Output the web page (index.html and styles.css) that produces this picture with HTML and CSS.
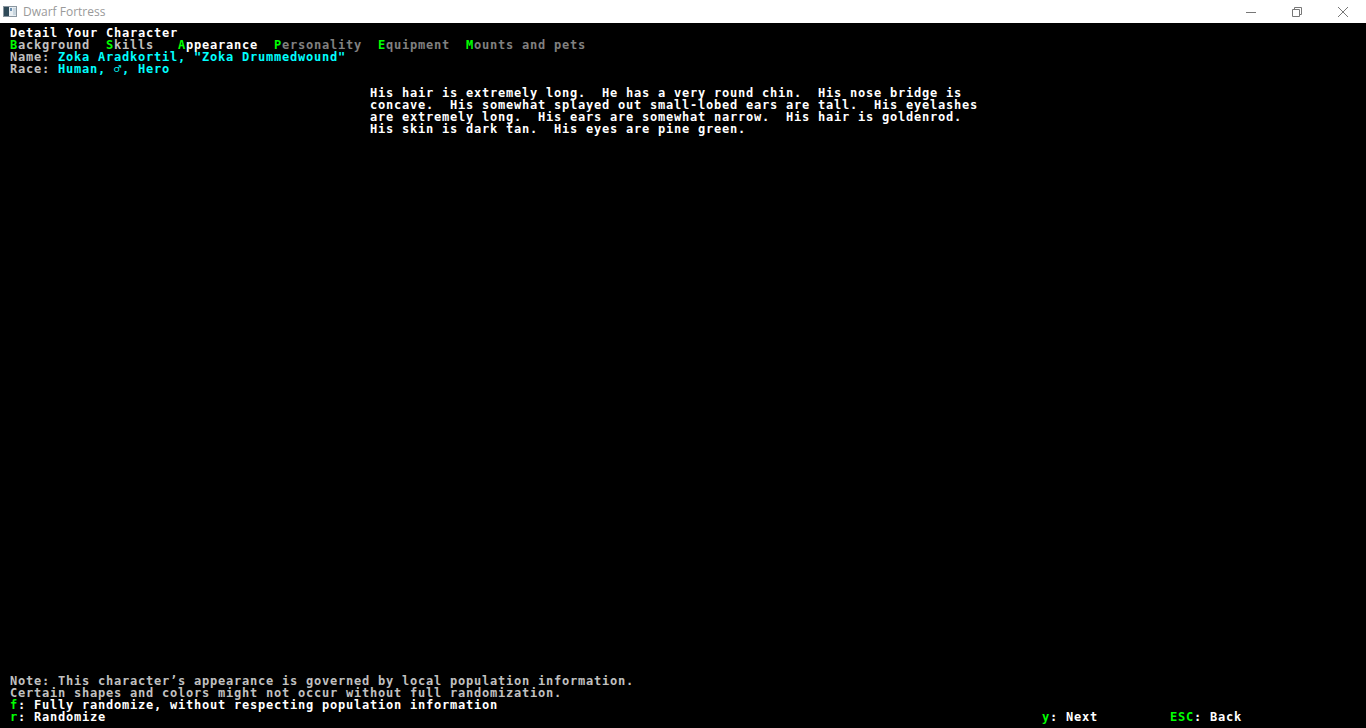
FILE: index.html
```html
<!DOCTYPE html>
<html lang="en">
<head>
  <meta charset="UTF-8">
  <title>Dwarf Fortress</title>
  <link rel="stylesheet" href="styles.css">
</head>
<body>

  <div class="titlebar">
    <svg class="app-icon" width="14" height="11" viewBox="0 0 14 11">
      <rect x="0.5" y="0.5" width="13" height="10" fill="#e8eef2" stroke="#8a96a0"/>
      <rect x="1" y="1" width="5" height="9" fill="#2f4a58"/>
      <rect x="7" y="2" width="2" height="3" fill="#6c8fb0"/>
      <rect x="10" y="2" width="3" height="7" fill="#c9d6df"/>
    </svg>
    <span class="title">Dwarf Fortress</span>
    <div class="win-buttons">
      <div class="win-btn">
        <svg width="10" height="10" viewBox="0 0 10 10"><path d="M0 5.5h10" stroke="#777" stroke-width="1"/></svg>
      </div>
      <div class="win-btn">
        <svg width="10" height="10" viewBox="0 0 10 10">
          <path d="M0.5 2.5h7v7h-7z M2.5 2.5v-2h7v7h-2" fill="none" stroke="#777" stroke-width="1"/>
        </svg>
      </div>
      <div class="win-btn">
        <svg width="10" height="10" viewBox="0 0 10 10"><path d="M0 0L10 10M10 0L0 10" stroke="#777" stroke-width="1"/></svg>
      </div>
    </div>
  </div>

  <div class="screen">
    <div class="header">
      <div class="line white">Detail Your Character</div>
      <div class="line"><span class="green">B</span><span class="gray">ackground  </span><span class="green">S</span><span class="gray">kills   </span><span class="green">A</span><span class="white">ppearance  </span><span class="green">P</span><span class="dark">ersonality  </span><span class="green">E</span><span class="dark">quipment  </span><span class="green">M</span><span class="dark">ounts and pets</span></div>
      <div class="line"><span class="gray">Name: </span><span class="cyan">Zoka Aradkortil, "Zoka Drummedwound"</span></div>
      <div class="line"><span class="gray">Race: </span><span class="cyan">Human, ♂, Hero</span></div>
    </div>

    <div class="description white">
      <div class="line">His hair is extremely long.  He has a very round chin.  His nose bridge is</div>
      <div class="line">concave.  His somewhat splayed out small-lobed ears are tall.  His eyelashes</div>
      <div class="line">are extremely long.  His ears are somewhat narrow.  His hair is goldenrod.</div>
      <div class="line">His skin is dark tan.  His eyes are pine green.</div>
    </div>

    <div class="footer">
      <div class="line gray">Note: This character’s appearance is governed by local population information.</div>
      <div class="line gray">Certain shapes and colors might not occur without full randomization.</div>
      <div class="line"><span class="green">f</span><span class="white">: Fully randomize, without respecting population information</span></div>
      <div class="line key-row">
        <span><span class="green">r</span><span class="white">: Randomize</span></span>
        <span><span class="green">y</span><span class="white">: Next</span></span>
        <span><span class="green">ESC</span><span class="white">: Back</span></span>
      </div>
    </div>
  </div>

</body>
</html>
```
FILE: styles.css
```css
html, body {
  margin: 0;
  padding: 0;
  height: 100%;
  overflow: hidden;
  background-color: #000;
}

body {
  display: flex;
  flex-direction: column;
}

.titlebar {
  height: 23px;
  flex: none;
  background-color: #fff;
  display: flex;
  align-items: center;
  font-family: "Open Sans", "Noto Sans", sans-serif;
}

.app-icon {
  margin-left: 3px;
  margin-right: 6px;
}

.title {
  font-size: 12px;
  color: #9a9a9a;
}

.win-buttons {
  margin-left: auto;
  display: flex;
  height: 100%;
}

.win-btn {
  width: 46px;
  height: 100%;
  display: flex;
  align-items: center;
  justify-content: center;
}

/* 8x12 character grid */
.screen {
  flex: 1;
  display: flex;
  flex-direction: column;
  padding: 4px 0 5px 10px;
  font-family: "DejaVu Sans Mono", "Liberation Mono", monospace;
  font-weight: bold;
  font-size: 12px;
  letter-spacing: 0.775px;
  line-height: 12px;
  color: #c0c0c0;
}

.line {
  height: 12px;
  white-space: pre;
}

.description {
  margin-top: 12px;
  padding-left: 360px;
}

.footer {
  margin-top: auto;
}

.key-row {
  display: grid;
  grid-template-columns: 1032px 128px 1fr;
}

.white { color: #ffffff; }
.gray { color: #c0c0c0; }
.dark { color: #808080; }
.green { color: #00ff00; }
.cyan { color: #00ffff; }
```
